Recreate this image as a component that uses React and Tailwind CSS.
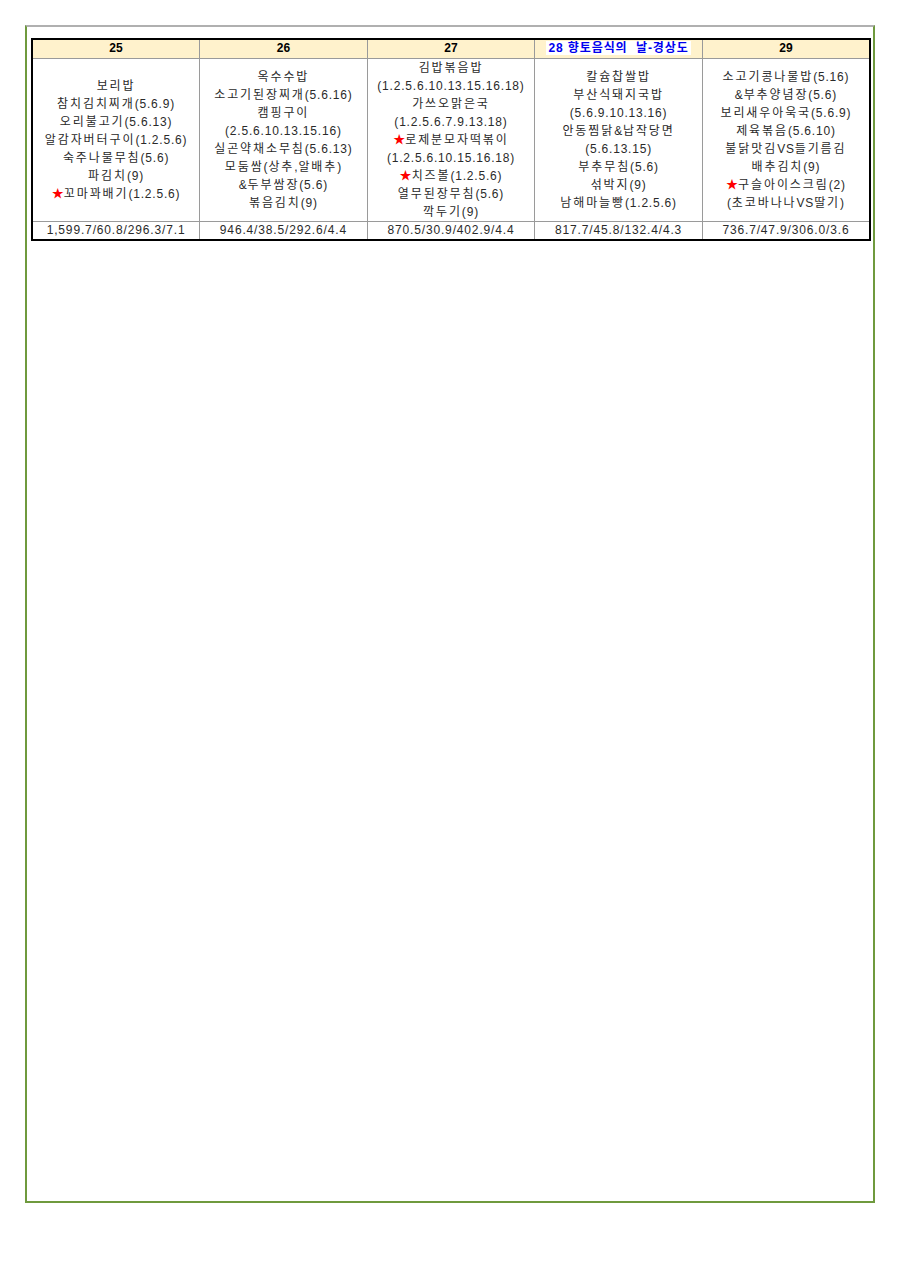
const days = [
  {
    day: '25',
    menu: ['보리밥', '참치김치찌개(5.6.9)', '오리불고기(5.6.13)', '알감자버터구이(1.2.5.6)', '숙주나물무침(5.6)', '파김치(9)', '★꼬마꽈배기(1.2.5.6)'],
    nutri: '1,599.7/60.8/296.3/7.1',
  },
  {
    day: '26',
    menu: ['옥수수밥', '소고기된장찌개(5.6.16)', '캠핑구이', '(2.5.6.10.13.15.16)', '실곤약채소무침(5.6.13)', '모둠쌈(상추,알배추)', '&두부쌈장(5.6)', '볶음김치(9)'],
    nutri: '946.4/38.5/292.6/4.4',
  },
  {
    day: '27',
    menu: ['김밥볶음밥', '(1.2.5.6.10.13.15.16.18)', '가쓰오맑은국', '(1.2.5.6.7.9.13.18)', '★로제분모자떡볶이', '(1.2.5.6.10.15.16.18)', '★치즈볼(1.2.5.6)', '열무된장무침(5.6)', '깍두기(9)'],
    nutri: '870.5/30.9/402.9/4.4',
  },
  {
    day: '28 향토음식의\u00a0\u00a0날-경상도',
    special: true,
    menu: ['칼슘찹쌀밥', '부산식돼지국밥', '(5.6.9.10.13.16)', '안동찜닭&납작당면', '(5.6.13.15)', '부추무침(5.6)', '섞박지(9)', '남해마늘빵(1.2.5.6)'],
    nutri: '817.7/45.8/132.4/4.3',
  },
  {
    day: '29',
    menu: ['소고기콩나물밥(5.16)', '&부추양념장(5.6)', '보리새우아욱국(5.6.9)', '제육볶음(5.6.10)', '불닭맛김VS들기름김', '배추김치(9)', '★구슬아이스크림(2)', '(초코바나나VS딸기)'],
    nutri: '736.7/47.9/306.0/3.6',
  },
];

// hangul runs get wider spacing, like the original sheet's font
const Spaced = ({ text }) =>
  text.split(/([\uac00-\ud7a3]+)/).filter(Boolean).map((part, i) =>
    /[\uac00-\ud7a3]/.test(part) ? (
      <span key={i} className="tracking-[1.9px]">{part}</span>
    ) : (
      <span key={i} className="tracking-[0.8px]">{part}</span>
    )
  );

const MenuLine = ({ text }) => {
  if (text.startsWith('★')) {
    return (
      <div>
        <span className="text-[#ff0000]">★</span>
        <Spaced text={text.slice(1)} />
      </div>
    );
  }
  return (
    <div>
      <Spaced text={text} />
    </div>
  );
};

export default function App() {
  return (
    <div className="w-[900px] h-[1273px] bg-white pt-[25px] pl-[25px]" style={{ fontFamily: '"Liberation Sans", "Noto Sans CJK KR", sans-serif' }}>
      <div className="w-[850px] h-[1178px] border-t-2 border-t-[#b0b0b0] border-l-2 border-r-2 border-b-2 border-l-[#6f9a3e] border-r-[#6f9a3e] border-b-[#6f9a3e] pt-[11px] pl-[4px]">
        <table className="w-[840px] border-collapse border-2 border-black table-fixed text-[12px] text-[#2a2a2a]">
          <tbody>
            <tr className="bg-[#fff2cc] h-[19px]">
              {days.map((d) => (
                <td key={d.day} className="border border-[#9a9a9a] text-center font-bold leading-[17px] p-0 text-[12px]">
                  {d.special ? (
                    <span className="bg-white text-[#0000ee] tracking-[0.9px] px-[2px]">{d.day}</span>
                  ) : (
                    <span className="text-black">{d.day}</span>
                  )}
                </td>
              ))}
            </tr>
            <tr className="h-[162px]">
              {days.map((d) => (
                <td key={d.day} className="border border-[#9a9a9a] text-center align-middle leading-[18px] p-0">
                  {d.menu.map((m, i) => (
                    <MenuLine key={i} text={m} />
                  ))}
                </td>
              ))}
            </tr>
            <tr className="h-[19px]">
              {days.map((d) => (
                <td key={d.day} className="border border-[#9a9a9a] text-center leading-[17px] tracking-[0.85px] p-0">
                  {d.nutri}
                </td>
              ))}
            </tr>
          </tbody>
        </table>
      </div>
    </div>
  );
}
